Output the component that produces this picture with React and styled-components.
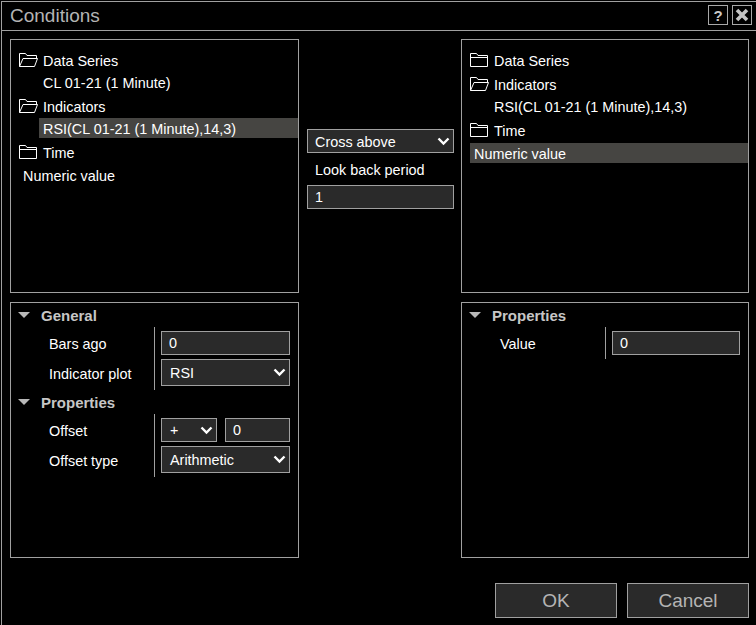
import React from 'react';
import styled, { createGlobalStyle } from 'styled-components';

const GlobalStyle = createGlobalStyle`
  html, body {
    margin: 0;
    padding: 0;
    background: #000;
  }
  body {
    font-family: "Liberation Sans", Arial, sans-serif;
    font-size: 14.4px;
    color: #fff;
  }
`;

const Window = styled.div`
  box-sizing: border-box;
  width: 755px;
  height: 624px;
  margin: 1px 0 0 1px;
  border-top: 1px solid #a0a0a0;
  border-left: 1px solid #a0a0a0;
  background: #000;
  overflow: hidden;
`;

const TitleBar = styled.div`
  box-sizing: border-box;
  height: 29px;
  border-bottom: 1px solid #a0a0a0;
  display: flex;
  align-items: center;
  padding: 0 4px 2px 8px;
`;

const Title = styled.div`
  flex: 1;
  font-size: 19px;
  padding-top: 1px;
  color: #b4b4b4;
`;

const TitleButton = styled.div`
  box-sizing: border-box;
  width: 20px;
  height: 20px;
  margin-left: 4px;
  border: 1px solid #a8a8a8;
  display: flex;
  align-items: center;
  justify-content: center;
  color: #c8c8c8;
  font-size: 15px;
  font-weight: bold;
`;

const Body = styled.div`
  display: flex;
  padding: 8px 0 0 8px;
`;

const Column = styled.div`
  display: flex;
  flex-direction: column;
  gap: 9px;
  width: ${(p) => p.$w}px;
  flex: none;
`;

const Panel = styled.div`
  box-sizing: border-box;
  height: ${(p) => p.$h}px;
  border: 1px solid #a0a0a0;
  padding-top: ${(p) => p.$top || 0}px;
`;

const Middle = styled.div`
  box-sizing: border-box;
  width: 147px;
  flex: none;
  margin: 0 7px 0 8px;
  padding-top: 90px;
  display: flex;
  flex-direction: column;
`;

const Label = styled.div`
  height: 32px;
  line-height: 34px;
  padding-left: 8px;
`;

const TreeRow = styled.div`
  display: flex;
  align-items: center;
  height: 20px;
  line-height: 22px;
  padding-top: 1px;
  box-sizing: border-box;
  white-space: nowrap;
  margin-bottom: ${(p) => 3 + (p.$extra || 0)}px;
  margin-left: ${(p) => p.$indent}px;
  padding-left: ${(p) => p.$pad || 0}px;
  background: ${(p) => (p.$selected ? '#464542' : 'transparent')};
`;

const RowName = styled.span`
  padding-top: 2px;
`;

const FolderIcon = styled.svg`
  width: 19px;
  height: 16px;
  margin-right: 5px;
  flex: none;
`;

const Section = styled.div`
  display: flex;
  align-items: center;
  height: 24px;
  padding-left: 7px;
  font-size: 15px;
  font-weight: bold;
  color: #c6c6c6;
`;

const Triangle = styled.span`
  width: 0;
  height: 0;
  margin-right: 11px;
  border-left: 6px solid transparent;
  border-right: 6px solid transparent;
  border-top: 6px solid #b8b8b8;
`;

const Props = styled.div`
  display: grid;
  grid-template-columns: 150px 1fr;
  padding: 4px 0;
  row-gap: 4px;
  position: relative;
`;

const Divider = styled.div`
  position: absolute;
  left: 143px;
  top: 0;
  bottom: 0;
  width: 1px;
  background: #a0a0a0;
`;

const PropLabel = styled.div`
  height: 24px;
  line-height: 26px;
  padding-left: 38px;
  align-self: center;
  white-space: nowrap;
`;

const PropCell = styled.div`
  display: flex;
  gap: 8px;
  padding-right: 8px;
`;

const Field = styled.input`
  box-sizing: border-box;
  display: block;
  flex: ${(p) => (p.$fixed ? 'none' : 1)};
  width: 100%;
  min-width: 0;
  height: 24px;
  padding: 0 7px;
  border: 1px solid #a0a0a0;
  background: #2a2a2a;
  color: #fff;
  font: 14.4px "Liberation Sans", Arial, sans-serif;
  outline: none;
`;

const SelectBox = styled.div`
  box-sizing: border-box;
  display: flex;
  align-items: center;
  justify-content: space-between;
  flex: none;
  width: ${(p) => (p.$w ? p.$w + 'px' : '100%')};
  height: ${(p) => p.$h || 24}px;
  padding: 0 3px 0 ${(p) => p.$left || 8}px;
  border: 1px solid #a0a0a0;
  background: #2a2a2a;
  color: #fff;
  white-space: nowrap;
`;

const SelectText = styled.span`
  padding-top: ${(p) => p.$down || 0}px;
`;

const Footer = styled.div`
  display: flex;
  justify-content: flex-end;
  gap: 10px;
  padding: 25px 7px 0 0;
`;

const Button = styled.div`
  box-sizing: border-box;
  width: 122px;
  height: 35px;
  display: flex;
  align-items: center;
  justify-content: center;
  border: 1px solid #a0a0a0;
  background: #2a2a2a;
  color: #b4b4b4;
  font-size: 19px;
`;

const Chevron = () => (
  <svg width="13" height="9" viewBox="0 0 13 9">
    <polyline points="1.5,1.5 6.5,6.5 11.5,1.5" fill="none" stroke="#fff" strokeWidth="2.4" />
  </svg>
);

const CloseIcon = () => (
  <svg width="14" height="14" viewBox="0 0 14 14">
    <path d="M2 2 L12 12 M12 2 L2 12" stroke="#c4c4c4" strokeWidth="3.6" />
  </svg>
);

const Folder = ({ open }) => (
  <FolderIcon viewBox="0 0 19 16">
    {open ? (
      <path d="M0.5 14.5 V1.5 H6.5 L8 3.5 H17.5 V6.5 M0.5 14.5 L4 6.5 H18.5 L15.5 14.5 Z" fill="none" stroke="#fff" />
    ) : (
      <path d="M0.5 14.5 V1.5 H6.5 L8 3.5 H17.5 V14.5 Z M0.5 5.5 H17.5" fill="none" stroke="#fff" />
    )}
  </FolderIcon>
);

const Select = ({ value, w, h, left, down }) => (
  <SelectBox $w={w} $h={h} $left={left}>
    <SelectText $down={down}>{value}</SelectText>
    <Chevron />
  </SelectBox>
);

const TreeFolder = ({ name, open, extra }) => (
  <TreeRow $indent={8} $extra={extra}>
    <Folder open={open} />
    <RowName>{name}</RowName>
  </TreeRow>
);

const TreeChild = ({ name, selected }) => (
  <TreeRow $indent={28} $pad={4} $selected={selected}>
    {name}
  </TreeRow>
);

const SectionHead = ({ name }) => (
  <Section>
    <Triangle />
    {name}
  </Section>
);

const App = () => (
  <>
    <GlobalStyle />
    <Window>
      <TitleBar>
        <Title>Conditions</Title>
        <TitleButton>?</TitleButton>
        <TitleButton>
          <CloseIcon />
        </TitleButton>
      </TitleBar>
      <Body>
        <Column $w={289}>
          <Panel $h={254} $top={9}>
            <TreeFolder name="Data Series" open />
            <TreeChild name="CL 01-21 (1 Minute)" />
            <TreeFolder name="Indicators" open />
            <TreeChild name="RSI(CL 01-21 (1 Minute),14,3)" selected />
            <TreeFolder name="Time" />
            <TreeRow $indent={8} $pad={4}><RowName>Numeric value</RowName></TreeRow>
          </Panel>
          <Panel $h={256}>
            <SectionHead name="General" />
            <Props>
              <Divider />
              <PropLabel>Bars ago</PropLabel>
              <PropCell><Field defaultValue="0" readOnly /></PropCell>
              <PropLabel>Indicator plot</PropLabel>
              <PropCell><Select value="RSI" h={27} /></PropCell>
            </Props>
            <SectionHead name="Properties" />
            <Props>
              <Divider />
              <PropLabel>Offset</PropLabel>
              <PropCell>
                <Select value="+" w={56} />
                <Field defaultValue="0" readOnly />
              </PropCell>
              <PropLabel>Offset type</PropLabel>
              <PropCell><Select value="Arithmetic" h={27} /></PropCell>
            </Props>
          </Panel>
        </Column>
        <Middle>
          <Select value="Cross above" left={7} down={2} />
          <Label>Look back period</Label>
          <Field defaultValue="1" readOnly $fixed />
        </Middle>
        <Column $w={288}>
          <Panel $h={254} $top={9}>
            <TreeFolder name="Data Series" extra={1} />
            <TreeFolder name="Indicators" open />
            <TreeChild name="RSI(CL 01-21 (1 Minute),14,3)" />
            <TreeFolder name="Time" extra={1} />
            <TreeRow $indent={8} $pad={4} $selected>Numeric value</TreeRow>
          </Panel>
          <Panel $h={256}>
            <SectionHead name="Properties" />
            <Props>
              <Divider />
              <PropLabel>Value</PropLabel>
              <PropCell><Field defaultValue="0" readOnly /></PropCell>
            </Props>
          </Panel>
        </Column>
      </Body>
      <Footer>
        <Button>OK</Button>
        <Button>Cancel</Button>
      </Footer>
    </Window>
  </>
);

export default App;
